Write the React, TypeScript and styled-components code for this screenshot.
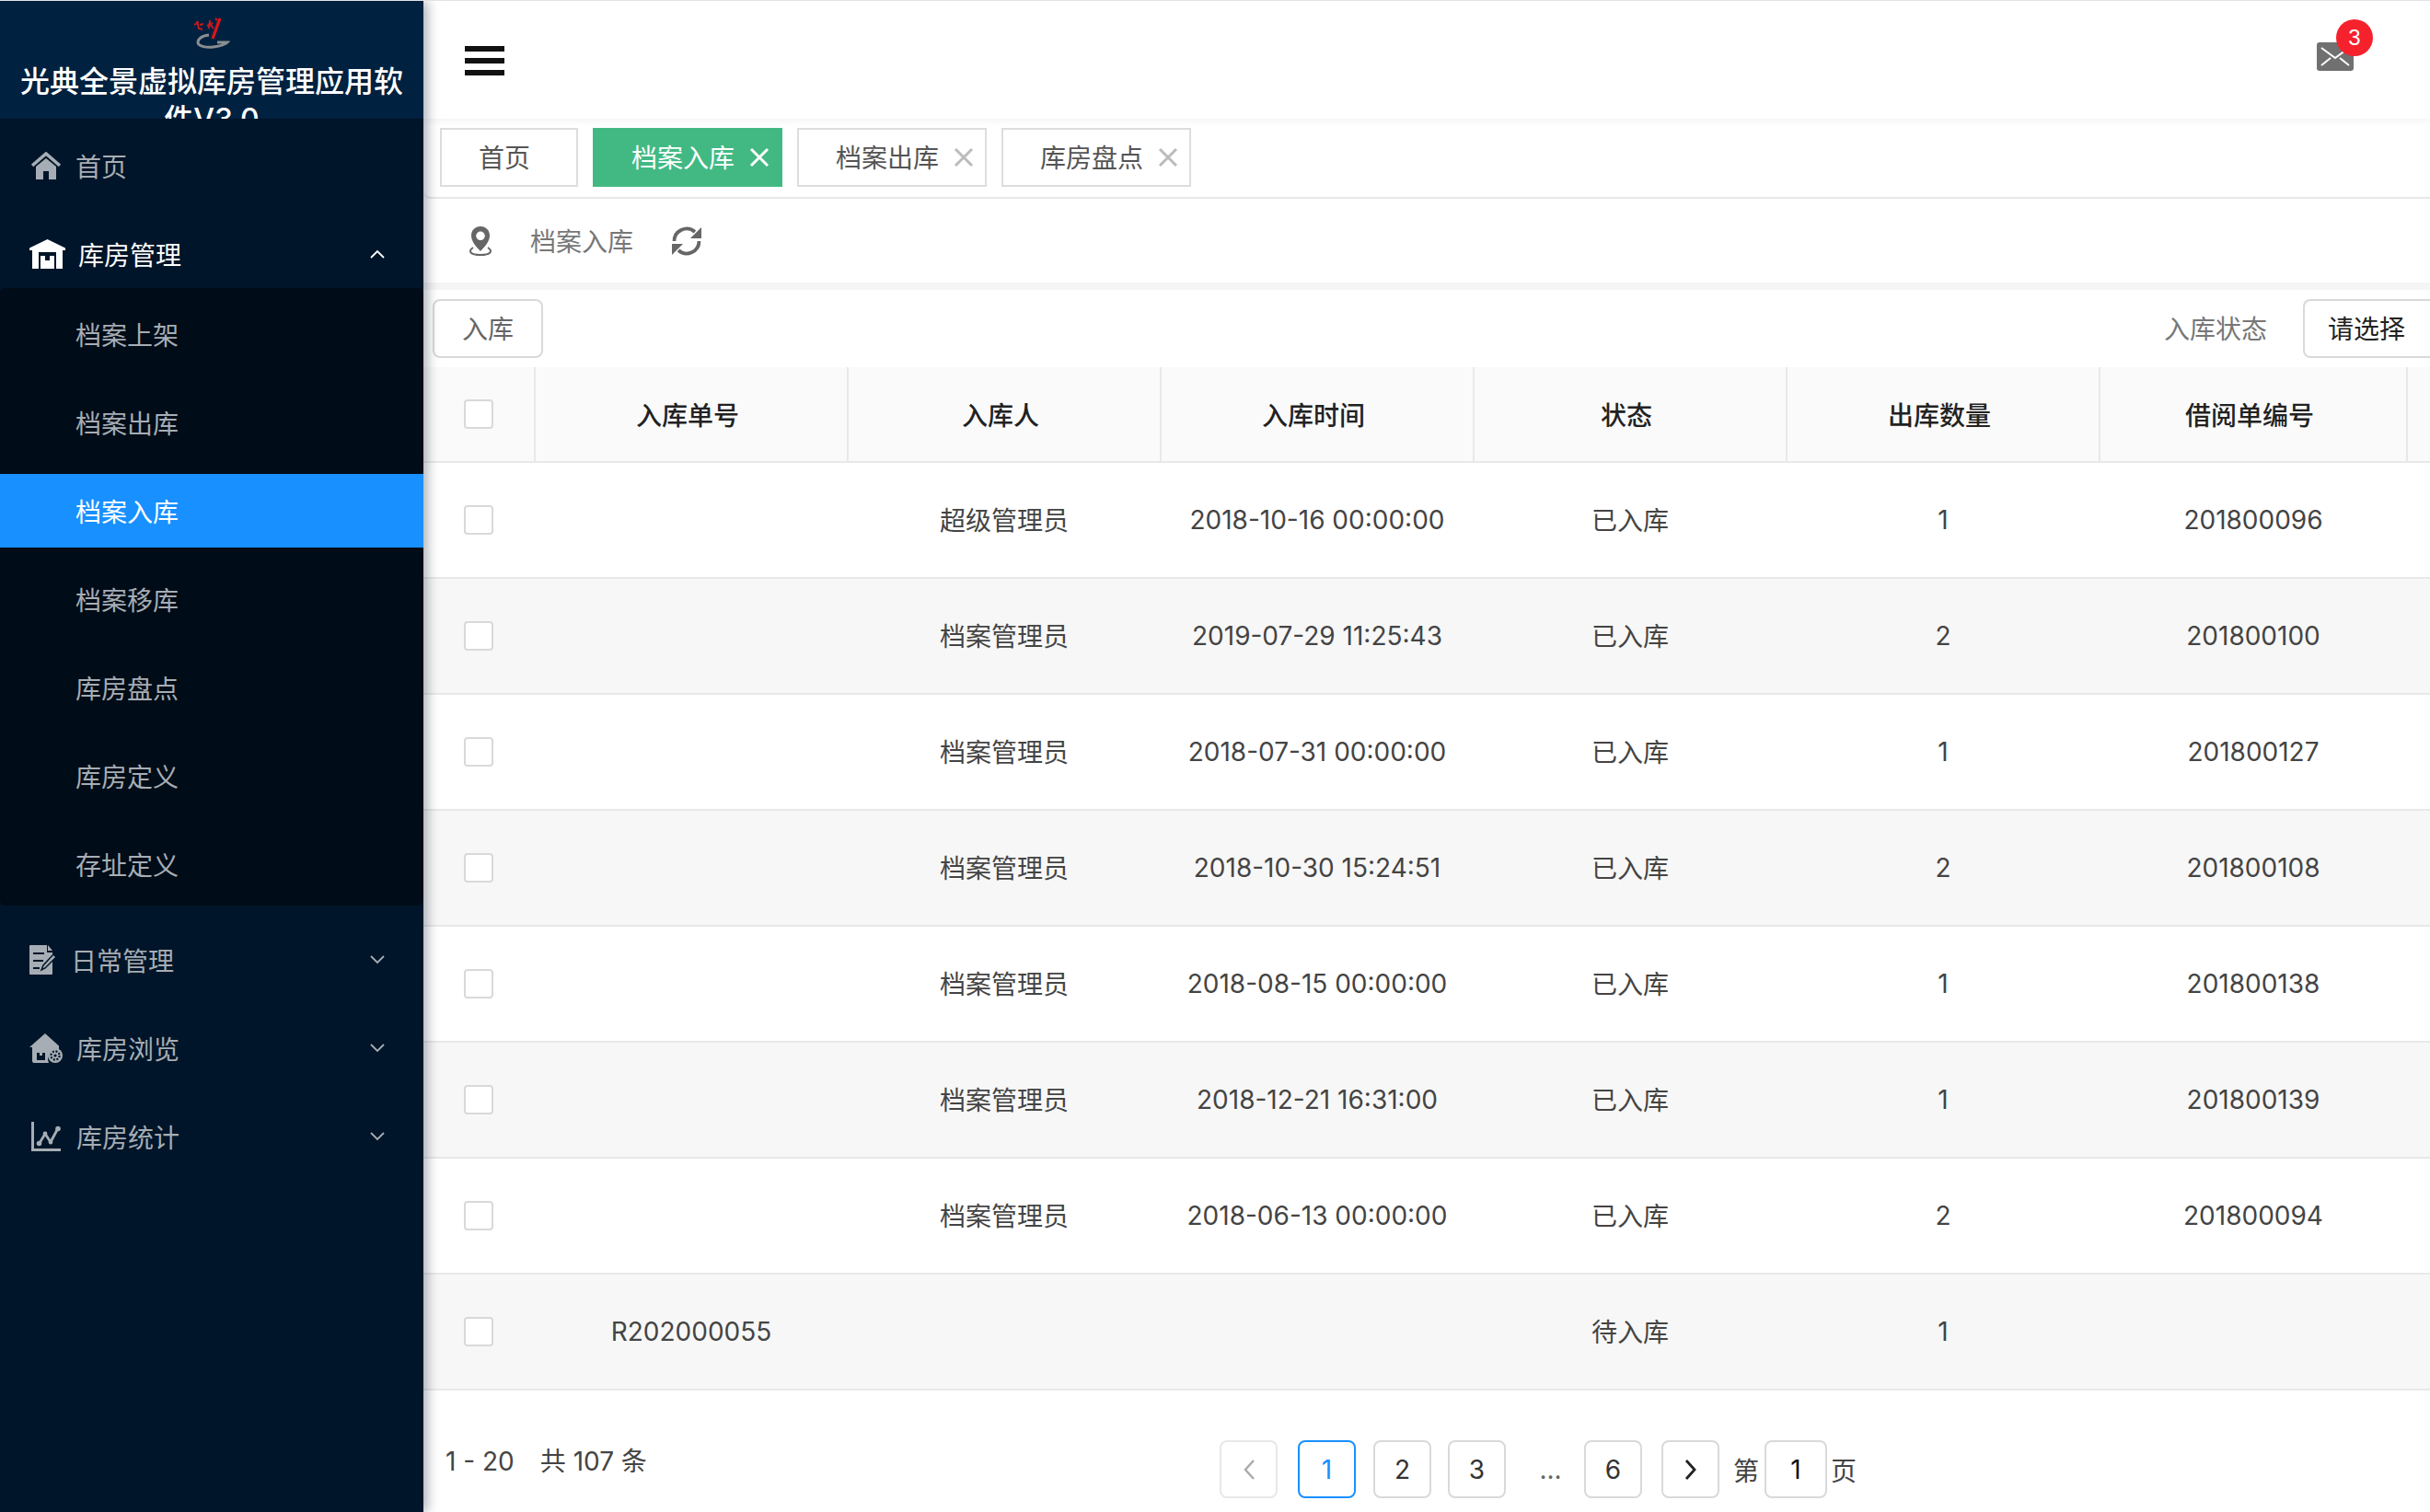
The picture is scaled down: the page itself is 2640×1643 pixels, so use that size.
import React from "react";
import styled, { createGlobalStyle } from "styled-components";

const Global = createGlobalStyle`
  html, body { margin: 0; padding: 0; background: #fff; }
  body { width: 2640px; height: 1643px; overflow: hidden; font-family: "Inter", "Noto Sans CJK SC", sans-serif; }
  * { box-sizing: border-box; }
`;

const Page = styled.div`
  display: flex;
  width: 2640px;
  height: 1643px;
  overflow: hidden;
  border-top: 1px solid #e2e2e6;
`;

const Sidebar = styled.aside`
  flex: 0 0 460px;
  height: 100%;
  background: #001529;
  box-shadow: 4px 0 12px rgba(0, 21, 41, 0.35);
  position: relative;
  z-index: 2;
`;

const Brand = styled.div`
  height: 128px;
  background: #002140;
  overflow: hidden;
  padding: 17px 16px 0;
  text-align: center;
`;

const BrandLogo = styled.svg`
  display: block;
  width: 40px;
  height: 35px;
  margin: 0 auto;
`;

const BrandTitle = styled.div`
  color: #fff;
  font-size: 32px;
  line-height: 41px;
  font-weight: 500;
  margin-top: 15px;
`;

const Menu = styled.nav`
  padding-top: 3px;
`;

const MenuRow = styled.div<{ $open?: boolean; $top?: number }>`
  display: flex;
  align-items: center;
  height: 96px;
  margin-top: ${(p) => p.$top ?? 0}px;
  padding-left: 32px;
  font-size: 28px;
  color: ${(p) => (p.$open ? "#fff" : "#a6adb4")};
`;

const MenuIcon = styled.svg<{ $space: number; $left?: number }>`
  flex: 0 0 auto;
  margin-left: ${(p) => p.$left ?? 0}px;
  margin-right: ${(p) => p.$space}px;
`;

const Chevron = styled.svg`
  margin-left: auto;
  margin-right: 42px;
  width: 16px;
  height: 10px;
`;

const SubMenu = styled.div`
  display: flex;
  flex-direction: column;
  gap: 16px;
  background: #000c17;
  border-radius: 6px;
  padding: 10px 0 5px;
  margin-top: -11px;
`;

const SubItem = styled.div<{ $active?: boolean }>`
  display: flex;
  align-items: center;
  height: 80px;
  padding-left: 82px;
  font-size: 28px;
  color: ${(p) => (p.$active ? "#fff" : "#a6adb4")};
  background: ${(p) => (p.$active ? "#1890ff" : "transparent")};
`;

const Main = styled.main`
  flex: 1;
  min-width: 0;
  display: flex;
  flex-direction: column;
`;

const Topbar = styled.header`
  height: 128px;
  flex: 0 0 128px;
  display: flex;
  align-items: center;
  justify-content: space-between;
  padding: 0 48px 0 45px;
  box-shadow: 0 2px 8px rgba(0, 21, 41, 0.06);
  position: relative;
`;

const Hamburger = styled.div`
  width: 43px;
  display: flex;
  flex-direction: column;
  gap: 7px;
  margin-top: 1px;
  span {
    display: block;
    height: 6px;
    background: #111;
  }
`;

const Mail = styled.div`
  position: relative;
  width: 40px;
  height: 31px;
  margin-top: -7px;
  margin-right: 35px;
`;

const Badge = styled.span`
  position: absolute;
  left: 21px;
  top: -25px;
  width: 40px;
  height: 40px;
  border-radius: 50%;
  background: #f5222d;
  color: #fff;
  font-size: 24px;
  line-height: 40px;
  text-align: center;
  font-family: "Liberation Sans", sans-serif;
`;

const Tabs = styled.div`
  height: 87px;
  flex: 0 0 87px;
  display: flex;
  gap: 16px;
  padding: 10px 0 0 18px;
  border-bottom: 2px solid #e8e8e8;
  border-bottom-left-radius: 8px;
`;

const Tab = styled.div<{ $active?: boolean; $closable?: boolean }>`
  height: 64px;
  width: ${(p) => (p.$closable ? "206px" : "150px")};
  display: flex;
  align-items: center;
  padding: 0 0 3px 40px;
  font-size: 28px;
  border: 2px solid ${(p) => (p.$active ? "#42b983" : "#ddd")};
  background: ${(p) => (p.$active ? "#42b983" : "#fff")};
  color: ${(p) => (p.$active ? "#fff" : "#555")};
`;

const TabClose = styled.svg<{ $on?: boolean }>`
  margin: 3px 0 0 16px;
  width: 22px;
  height: 22px;
  stroke: ${(p) => (p.$on ? "#fff" : "#bbb")};
`;

const Crumb = styled.div`
  height: 99px;
  flex: 0 0 99px;
  display: flex;
  align-items: center;
  padding-left: 49px;
  font-size: 28px;
  color: #777;
  border-bottom: 8px solid #f5f5f5;
`;

const CrumbText = styled.span`
  margin: 0 42px 2px 41px;
`;

const Toolbar = styled.div`
  height: 84px;
  flex: 0 0 84px;
  display: flex;
  align-items: center;
  justify-content: space-between;
  padding-left: 10px;
  font-size: 28px;
`;

const GhostButton = styled.div`
  width: 120px;
  height: 64px;
  display: flex;
  align-items: center;
  justify-content: center;
  padding-bottom: 2px;
  border: 2px solid #d9d9d9;
  border-radius: 8px;
  color: #666;
`;

const Filter = styled.div`
  display: flex;
  align-items: center;
  gap: 39px;
  color: #777;
`;

const FilterLabel = styled.span`
  margin-bottom: 2px;
`;

const Select = styled.div`
  width: 138px;
  height: 64px;
  display: flex;
  align-items: center;
  padding: 0 0 2px 25px;
  border: 2px solid #d9d9d9;
  border-right: 0;
  border-radius: 8px 0 0 8px;
  color: #222;
`;

const HeadRow = styled.div`
  display: grid;
  grid-template-columns: 122px repeat(5, 340px) 334px 1fr;
  height: 104px;
  background: #fafafa;
  border-bottom: 2px solid #e8e8e8;
`;

const HeadCell = styled.div`
  display: flex;
  align-items: center;
  justify-content: center;
  padding-right: 8px;
  font-size: 28px;
  font-weight: 500;
  color: #222;
  border-right: 2px solid #e8e8e8;
  &:last-child { border-right: 0; }
`;

const BodyRow = styled.div<{ $alt: boolean }>`
  display: grid;
  grid-template-columns: 121px repeat(5, 340px) 334px 1fr;
  height: 126px;
  background: ${(p) => (p.$alt ? "#f7f7f7" : "#fff")};
  border-bottom: 2px solid #e8e8e8;
`;

const BodyCell = styled.div<{ $cjk: boolean }>`
  display: flex;
  align-items: center;
  justify-content: center;
  padding-bottom: ${(p) => (p.$cjk ? "2px" : "0")};
  font-size: 28px;
  color: #444;
`;

const CheckCell = styled.div<{ $head?: boolean }>`
  display: flex;
  align-items: center;
  padding-left: 44px;
  border-right: ${(p) => (p.$head ? "2px solid #e8e8e8" : "0")};
`;

const Check = styled.span`
  display: block;
  width: 32px;
  height: 32px;
  background: #fff;
  border: 2px solid #d9d9d9;
  border-radius: 4px;
`;

const Footer = styled.div`
  display: flex;
  align-items: flex-start;
  padding: 54px 0 0 24px;
  font-size: 28px;
  color: #444;
`;

const Total = styled.div`
  width: 841px;
  line-height: 46px;
  span { margin-left: 28px; }
`;

const Pager = styled.div`
  display: flex;
  align-items: center;
  height: 63px;
`;

const PageBtn = styled.div<{ $active?: boolean; $off?: boolean; $gap?: number }>`
  width: 63px;
  height: 63px;
  margin-right: ${(p) => p.$gap ?? 18}px;
  display: flex;
  align-items: center;
  justify-content: center;
  border: 2px solid ${(p) => (p.$active ? "#1890ff" : p.$off ? "#e8e8e8" : "#d9d9d9")};
  border-radius: 8px;
  color: ${(p) => (p.$active ? "#1890ff" : "#333")};
  background: #fff;
`;

const Dots = styled.div`
  width: 67px;
  padding-right: 6px;
  text-align: center;
  color: #666;
`;

const PageWord = styled.span`
  color: #444;
`;

const PageInput = styled.div`
  width: 68px;
  height: 63px;
  display: flex;
  align-items: center;
  justify-content: center;
  border: 2px solid #d9d9d9;
  border-radius: 8px;
  color: #111;
  margin: 0 4px 0 6px;
`;

const HomeIcon = () => (
  <MenuIcon $space={16} $left={2} width="32" height="30" viewBox="0 0 32 30">
    <path d="M1 15 16 2l15 13" fill="none" stroke="#a6adb4" strokeWidth="3.6" />
    <path d="M5 16 16 7l11 9v14h-8v-9h-6v9H5z" fill="#a6adb4" />
  </MenuIcon>
);
const WarehouseIcon = () => (
  <MenuIcon $space={14} width="39" height="32" viewBox="0 0 39 32">
    <path d="M0 9.5 19.5 0 39 9.5V12h-3v20h-7V14H10v18H3V12H0z" fill="#fff" />
    <path d="M12 18h5v5h5v-5h5v14H12z" fill="#fff" />
  </MenuIcon>
);
const DocIcon = () => (
  <MenuIcon $space={16} width="29" height="32" viewBox="0 0 29 32">
    <path d="M0 1a1 1 0 0 1 1-1h18v8h6v23a1 1 0 0 1-1 1H1a1 1 0 0 1-1-1z" fill="#a6adb4" />
    <path d="M20 0l5 6h-5z" fill="#a6adb4" />
    <path d="M4 9h12M4 17h11M4 25h7" stroke="#001529" strokeWidth="2" />
    <path d="M13 27l2-5L26 10l3 3-12 12z" fill="#a6adb4" stroke="#001529" strokeWidth="1.5" />
  </MenuIcon>
);
const HouseGearIcon = () => (
  <MenuIcon $space={15} width="36" height="32" viewBox="0 0 36 32">
    <path d="M0 15 17 0l15 13.5V18a10 10 0 0 0-11 14H5a2 2 0 0 1-2-2V15z" fill="#a6adb4" />
    <path d="M8 21h3v3h3v-3h3v8H8z" fill="#001529" />
    <circle cx="28" cy="24" r="8" fill="#a6adb4" />
    <circle cx="28" cy="24" r="4.6" fill="none" stroke="#001529" strokeWidth="2.2" strokeDasharray="2 1.6" />
    <circle cx="28" cy="24" r="1.6" fill="#001529" />
  </MenuIcon>
);
const ChartIcon = () => (
  <MenuIcon $space={17} $left={2} width="32" height="32" viewBox="0 0 32 32">
    <path d="M1.500 0v30.500H32" fill="none" stroke="#a6adb4" strokeWidth="3" />
    <path d="M9 23l6-10 6 9 8-15" fill="none" stroke="#a6adb4" strokeWidth="2.800" />
    <circle cx="8.500" cy="23.500" r="2.800" fill="#a6adb4" />
    <circle cx="15" cy="13" r="2.400" fill="#a6adb4" />
    <circle cx="21" cy="22" r="2.400" fill="#a6adb4" />
    <circle cx="29" cy="7.500" r="2.800" fill="#a6adb4" />
  </MenuIcon>
);

const Down = ({ up }: { up?: boolean }) => (
  <Chevron viewBox="0 0 16 10">
    <path
      d={up ? "M1 9l7-7 7 7" : "M1 1l7 7 7-7"}
      fill="none"
      stroke={up ? "#fff" : "#a6adb4"}
      strokeWidth="1.8"
    />
  </Chevron>
);

const Close = ({ on }: { on?: boolean }) => (
  <TabClose $on={on} viewBox="0 0 22 22">
    <path d="M2 2l18 18M20 2 2 20" strokeWidth="3" fill="none" />
  </TabClose>
);

const rows = [
  ["", "超级管理员", "2018-10-16 00:00:00", "已入库", "1", "201800096"],
  ["", "档案管理员", "2019-07-29 11:25:43", "已入库", "2", "201800100"],
  ["", "档案管理员", "2018-07-31 00:00:00", "已入库", "1", "201800127"],
  ["", "档案管理员", "2018-10-30 15:24:51", "已入库", "2", "201800108"],
  ["", "档案管理员", "2018-08-15 00:00:00", "已入库", "1", "201800138"],
  ["", "档案管理员", "2018-12-21 16:31:00", "已入库", "1", "201800139"],
  ["", "档案管理员", "2018-06-13 00:00:00", "已入库", "2", "201800094"],
  ["R202000055", "", "", "待入库", "1", ""],
];

const heads = ["入库单号", "入库人", "入库时间", "状态", "出库数量", "借阅单编号"];

export default function App() {
  return (
    <>
      <Global />
      <Page>
        <Sidebar>
          <Brand>
            <BrandLogo viewBox="0 0 40 35">
              <path d="M29 2 21 24" stroke="#d4161c" strokeWidth="3.400" fill="none" />
              <path d="M1 9l5-3M4 5l2 8 4 1M7 9l4-1" stroke="#c9181e" strokeWidth="2" fill="none" />
              <path d="M15 10l6-3M18 4l-1 9M19 9l3 4M24 2l2 2" stroke="#c9181e" strokeWidth="2" fill="none" />
              <path d="M17 20C8 21 5 25 5 28c0 4 8 6 17 5 8-1 13-3 15-5H26" fill="none" stroke="#8a8d90" strokeWidth="3" />
            </BrandLogo>
            <BrandTitle>光典全景虚拟库房管理应用软件V3.0</BrandTitle>
          </Brand>
          <Menu>
            <MenuRow>
              <HomeIcon />
              首页
            </MenuRow>
            <MenuRow $open>
              <WarehouseIcon />
              库房管理
              <Down up />
            </MenuRow>
            <SubMenu>
              <SubItem>档案上架</SubItem>
              <SubItem>档案出库</SubItem>
              <SubItem $active>档案入库</SubItem>
              <SubItem>档案移库</SubItem>
              <SubItem>库房盘点</SubItem>
              <SubItem>库房定义</SubItem>
              <SubItem>存址定义</SubItem>
            </SubMenu>
            <MenuRow $top={11}>
              <DocIcon />
              日常管理
              <Down />
            </MenuRow>
            <MenuRow>
              <HouseGearIcon />
              库房浏览
              <Down />
            </MenuRow>
            <MenuRow>
              <ChartIcon />
              库房统计
              <Down />
            </MenuRow>
          </Menu>
        </Sidebar>
        <Main>
          <Topbar>
            <Hamburger>
              <span />
              <span />
              <span />
            </Hamburger>
            <Mail>
              <svg width="40" height="31" viewBox="0 0 40 31">
                <rect width="40" height="31" rx="3" fill="#707070" />
                <path d="M5 6l15 11L35 6M5 25l10-8M35 25l-10-8" fill="none" stroke="#fff" strokeWidth="2" />
              </svg>
              <Badge>3</Badge>
            </Mail>
          </Topbar>
          <Tabs>
            <Tab>首页</Tab>
            <Tab $active $closable>
              档案入库
              <Close on />
            </Tab>
            <Tab $closable>
              档案出库
              <Close />
            </Tab>
            <Tab $closable>
              库房盘点
              <Close />
            </Tab>
          </Tabs>
          <Crumb>
            <svg width="26" height="32" viewBox="0 0 26 32">
              <path
                fillRule="evenodd"
                d="M13 0c6 0 10 4.400 10 10 0 6-5 12-10 17C8 22 3 16 3 10 3 4.400 7 0 13 0zm0 5.500a4.800 4.800 0 1 0 0 9.600 4.800 4.800 0 0 0 0-9.600z"
                fill="#666"
              />
              <path d="M5 23c-6 4-3 8 8 8s14-4 8-8" fill="none" stroke="#666" strokeWidth="2" />
            </svg>
            <CrumbText>档案入库</CrumbText>
            <svg width="32" height="32" viewBox="0 0 32 32">
              <path d="M2.500 16A13.500 13.500 0 0 1 25 6" fill="none" stroke="#666" strokeWidth="3.800" />
              <path d="M29.500 16A13.500 13.500 0 0 1 7 26" fill="none" stroke="#666" strokeWidth="3.800" />
              <path d="M32 1v12H20z" fill="#666" />
              <path d="M0 31V19h12z" fill="#666" />
            </svg>
          </Crumb>
          <Toolbar>
            <GhostButton>入库</GhostButton>
            <Filter>
              <FilterLabel>入库状态</FilterLabel>
              <Select>请选择</Select>
            </Filter>
          </Toolbar>
          <HeadRow>
            <CheckCell $head>
              <Check />
            </CheckCell>
            {heads.map((h) => (
              <HeadCell key={h}>{h}</HeadCell>
            ))}
            <HeadCell />
          </HeadRow>
          {rows.map((r, i) => (
            <BodyRow key={i} $alt={i % 2 === 1}>
              <CheckCell>
                <Check />
              </CheckCell>
              {r.map((c, j) => (
                <BodyCell key={j} $cjk={j === 1 || j === 3}>
                  {c}
                </BodyCell>
              ))}
            </BodyRow>
          ))}
          <Footer>
            <Total>
              1 - 20<span>共 107 条</span>
            </Total>
            <Pager>
              <PageBtn $off $gap={22}>
                <svg width="14" height="24" viewBox="0 0 14 24">
                  <path d="M12 2 3 12l9 10" fill="none" stroke="#aaa" strokeWidth="2.400" />
                </svg>
              </PageBtn>
              <PageBtn $active $gap={19}>1</PageBtn>
              <PageBtn>2</PageBtn>
              <PageBtn>3</PageBtn>
              <Dots>...</Dots>
              <PageBtn $gap={21}>6</PageBtn>
              <PageBtn $gap={15}>
                <svg width="14" height="24" viewBox="0 0 14 24">
                  <path d="M2 2l9 10-9 10" fill="none" stroke="#222" strokeWidth="2.800" />
                </svg>
              </PageBtn>
              <PageWord>第</PageWord>
              <PageInput>1</PageInput>
              <PageWord>页</PageWord>
            </Pager>
          </Footer>
        </Main>
      </Page>
    </>
  );
}
